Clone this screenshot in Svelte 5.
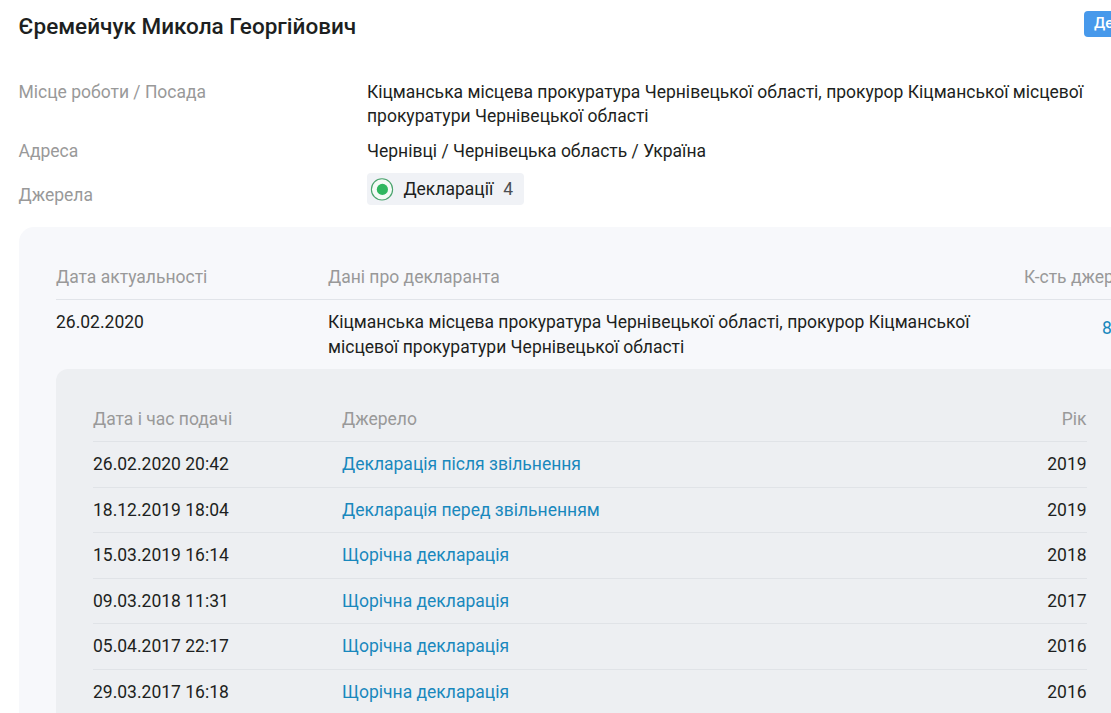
<script>
  const declarations = [
    { date: '26.02.2020 20:42', source: 'Декларація після звільнення', year: 2019 },
    { date: '18.12.2019 18:04', source: 'Декларація перед звільненням', year: 2019 },
    { date: '15.03.2019 16:14', source: 'Щорічна декларація', year: 2018 },
    { date: '09.03.2018 11:31', source: 'Щорічна декларація', year: 2017 },
    { date: '05.04.2017 22:17', source: 'Щорічна декларація', year: 2016 },
    { date: '29.03.2017 16:18', source: 'Щорічна декларація', year: 2016 }
  ];
</script>

<main>
  <header>
    <h1>Єремейчук Микола Георгійович</h1>
    <span class="tag">Де</span>
  </header>

  <dl>
    <dt>Місце роботи / Посада</dt>
    <dd class="job">Кіцманська місцева прокуратура Чернівецької області, прокурор Кіцманської місцевої<br />прокуратури Чернівецької області</dd>
    <dt class="address">Адреса</dt>
    <dd class="address">Чернівці / Чернівецька область / Україна</dd>
    <dt class="sources">Джерела</dt>
    <dd>
      <span class="chip">
        <svg width="24" height="24" viewBox="0 0 24 24" aria-hidden="true">
          <circle cx="12" cy="12.4" r="10.6" fill="#f4fbf6" stroke="#49a36c" stroke-width="1.1" />
          <circle cx="12.4" cy="12.4" r="5.6" fill="#2fb75f" />
        </svg>
        <span class="name">Декларації</span>
        <span class="count">4</span>
      </span>
    </dd>
  </dl>

  <section class="panel">
    <div class="outer head">
      <span>Дата актуальності</span>
      <span>Дані про декларанта</span>
      <span>К-сть джерел</span>
    </div>
    <div class="outer entry">
      <span>26.02.2020</span>
      <span>Кіцманська місцева прокуратура Чернівецької області, прокурор Кіцманської<br />місцевої прокуратури Чернівецької області</span>
      <a class="total" href="#sources">8</a>
    </div>

    <div class="nested">
      <div class="row head">
        <span>Дата і час подачі</span>
        <span>Джерело</span>
        <span class="year">Рік</span>
      </div>
      {#each declarations as item}
        <div class="row">
          <span>{item.date}</span>
          <a href="#declaration">{item.source}</a>
          <span class="year">{item.year}</span>
        </div>
      {/each}
    </div>
  </section>
</main>

<style>
  :global(body) {
    margin: 0;
    background: #fff;
  }

  main {
    box-sizing: border-box;
    width: 100%;
    height: 713px;
    overflow: hidden;
    padding-left: 18.5px;
    font: 400 17.5px/24.5px Roboto, sans-serif;
    color: #1d1f21;
    white-space: nowrap;
  }

  header {
    display: flex;
    justify-content: space-between;
    height: 80px;
  }

  h1 {
    margin: 12px 0 0;
    font-size: 22.53px;
    line-height: 30px;
    font-weight: 500;
  }

  .tag {
    box-sizing: border-box;
    flex: none;
    width: 60px;
    height: 26px;
    margin: 11px -33px 0 0;
    padding-left: 10px;
    border-radius: 4px;
    background: #4799eb;
    color: #fff;
    font-size: 15px;
    line-height: 25px;
    font-weight: 500;
  }

  dl {
    display: grid;
    grid-template-columns: 348.5px 1fr;
    height: 147px;
    margin: 0;
    align-content: start;
  }

  dt {
    color: #999;
  }

  dd {
    margin: 0;
  }

  .job {
    line-height: 24px;
  }

  .address {
    padding: 10.5px 0 10px;
  }

  .sources {
    padding-top: 10px;
  }

  .chip {
    display: inline-flex;
    box-sizing: border-box;
    align-items: center;
    width: 156.5px;
    height: 32px;
    padding-left: 3px;
    border-radius: 4px;
    background: #f0f2f6;
  }

  .name {
    margin: 0 10px 0 9.4px;
  }

  .count {
    color: #4c4e52;
  }

  .panel {
    height: 486px;
    width: 1140px;
    box-sizing: border-box;
    padding: 38px 0 0 37.5px;
    border-radius: 15px 0 0 0;
    background: #f7f8fb;
  }

  .outer {
    display: grid;
    grid-template-columns: 272px 696px 1fr;
  }

  .outer.head {
    height: 34px;
    border-bottom: 1px solid #e1e4e9;
  }

  .head {
    color: #999;
  }

  .entry {
    height: 59px;
    padding-top: 10px;
  }

  .total {
    padding: 6px 0 0 78px;
  }

  a {
    color: #1988bd;
    text-decoration: none;
  }

  .nested {
    height: 345px;
    box-sizing: border-box;
    padding: 27.5px 0 0 37px;
    border-radius: 12px 0 0 0;
    background: #edeff2;
  }

  .row {
    display: grid;
    grid-template-columns: 249px 1fr 100px;
    align-items: center;
    box-sizing: border-box;
    width: 993.6px;
    height: 45.55px;
    border-bottom: 1px solid #e0e3e7;
  }

  .year {
    text-align: right;
  }
</style>
